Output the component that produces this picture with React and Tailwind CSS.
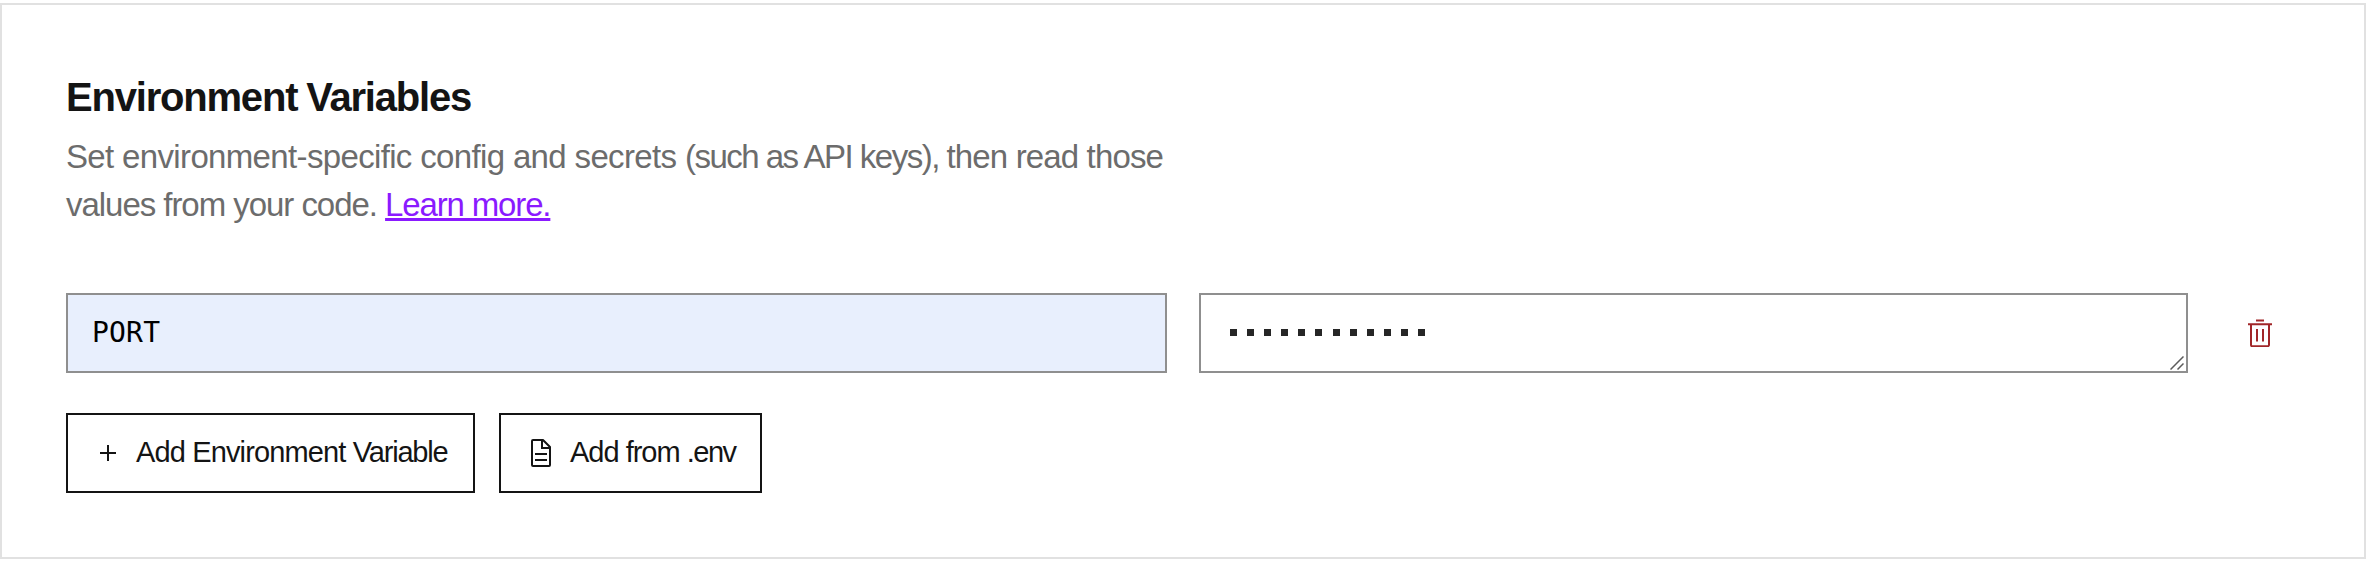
const DOTS = Array.from({ length: 12 });

function PlusIcon() {
  return (
    <svg width="16" height="16" viewBox="0 0 16 16" fill="#141414" shapeRendering="crispEdges">
      <path d="M7 0h2v16H7zM0 7h16v2H0z" />
    </svg>
  );
}

function FileIcon() {
  return (
    <svg width="20" height="28" viewBox="0 0 20 28" fill="none" stroke="#141414" strokeWidth="2">
      <path d="M2 1h10l7 7v18a1 1 0 0 1-1 1H2a1 1 0 0 1-1-1V2a1 1 0 0 1 1-1z" strokeLinejoin="round" />
      <path d="M11 1v8h8M4 15h12M4 21h12" />
    </svg>
  );
}

function TrashIcon() {
  return (
    <svg width="24" height="28" viewBox="0 0 24 28" fill="none" stroke="#a12628" strokeWidth="2">
      <path d="M8 1.4h8M0 5.2h24M9 10v12.5M15 10v12.5" />
      <path d="M3 5.2V26a1.2 1.2 0 0 0 1.2 1.2h15.6A1.2 1.2 0 0 0 21 26V5.2" />
    </svg>
  );
}

export default function App() {
  return (
    <div className="h-[564px] w-full bg-white pt-[3px] font-['Liberation_Sans',Arial,sans-serif] text-[#141414]">
      <section className="flex h-[556px] w-[2366px] flex-col border-2 border-[#e1e1e1] px-16 pt-[68px]">
        <h2 className="text-[40px] leading-[48px] font-bold tracking-[-1.2px] whitespace-nowrap [word-spacing:-1px]">
          Environment Variables
        </h2>
        <p className="mt-3 text-[33px] leading-[48px] whitespace-nowrap text-[#6c6c6c]">
          <span className="tracking-[-0.65px]">Set environment-specific config and secrets </span>
          <span className="tracking-[-1.5px]">(such as API keys), </span>
          <span className="tracking-[-0.85px]">then read those</span>
          <br />
          <span className="tracking-[-1.04px]">values from your code. </span>
          <a
            href="#"
            className="tracking-[-1.15px] text-[#8a1aff] underline decoration-[3px] underline-offset-[2px] [text-decoration-skip-ink:none]"
          >
            Learn more.
          </a>
        </p>
        <div className="mt-16 flex items-center">
          <div className="flex h-20 w-[1101px] items-center border-2 border-[#8f8f8f] bg-[#e8effd] px-6 font-['DejaVu_Sans_Mono',monospace] text-[28px] tracking-[0.2px] text-black">
            PORT
          </div>
          <div className="relative ml-8 flex h-20 w-[989px] items-center border-2 border-[#8f8f8f] pl-[29px]">
            <div className="flex gap-[10.1px] pb-px">
              {DOTS.map((_, i) => (
                <span key={i} className="size-[7px] bg-[#262626]" />
              ))}
            </div>
            <svg className="absolute right-[2px] bottom-[1px]" width="14" height="14" viewBox="0 0 14 14" fill="none" stroke="#5c5c5c" strokeWidth="1.5">
              <path d="M.5 13.5l13-13M7.5 13.5l6-6" />
            </svg>
          </div>
          <button className="ml-[60px]" aria-label="Delete variable">
            <TrashIcon />
          </button>
        </div>
        <div className="mt-10 flex gap-6 text-[29px]">
          <button className="flex h-20 w-[409px] items-center border-2 border-[#141414] pl-8 whitespace-nowrap">
            <PlusIcon />
            <span className="ml-5">
              <span className="tracking-[-0.86px]">Add Environment </span>
              <span className="tracking-[-1.2px]">Variable</span>
            </span>
          </button>
          <button className="flex h-20 w-[263px] items-center border-2 border-[#141414] pl-[30px] whitespace-nowrap">
            <FileIcon />
            <span className="ml-[19px]">
              <span className="tracking-[-1px]">Add from </span>
              <span className="tracking-[-1.5px]">.env</span>
            </span>
          </button>
        </div>
      </section>
    </div>
  );
}
